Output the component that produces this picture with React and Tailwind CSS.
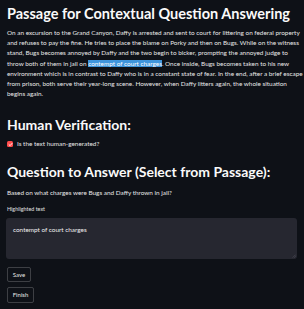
export default function App() {
  return (
    <div className="min-h-screen w-full bg-[#0e1117] text-[#fafafa] font-['Lato',sans-serif] pl-[7px] flex flex-col">
      <h1 className="mt-[4px] text-[14.5px] leading-[20px] font-bold">Passage for Contextual Question Answering</h1>
      <p className="mt-[4px] text-[6.4px] leading-[10.24px] text-[#e8e8e8] whitespace-nowrap">
        On an excursion to the Grand Canyon, Daffy is arrested and sent to court for littering on federal property
        <br />
        and refuses to pay the fine. He tries to place the blame on Porky and then on Bugs. While on the witness
        <br />
        stand, Bugs becomes annoyed by Daffy and the two begin to bicker, prompting the annoyed judge to
        <br />
        throw both of them in jail on <span className="bg-[#3f95dc] text-white">contempt of court charges</span>. Once inside, Bugs becomes taken to his new
        <br />
        environment which is in contrast to Daffy who is in a constant state of fear. In the end, after a brief escape
        <br />
        from prison, both serve their year-long scene. However, when Daffy litters again, the whole situation
        <br />
        begins again.
      </p>
      <h2 className="mt-[16px] text-[14px] leading-[18px] font-bold">Human Verification:</h2>
      <label className="mt-[5.5px] flex items-center gap-[4px] h-[10px] text-[6.4px] text-[#e8e8e8]">
        <span className="flex h-[6px] w-[6px] items-center justify-center rounded-[1.5px] bg-[#ff4b4b]">
          <svg viewBox="0 0 10 10" className="h-[5px] w-[5px]" fill="none" stroke="white" strokeWidth="1.8" strokeLinecap="round" strokeLinejoin="round">
            <path d="M2 5.2 L4.2 7.3 L8 2.8" />
          </svg>
        </span>
        Is the text human-generated?
      </label>
      <h2 className="mt-[13.5px] text-[14px] leading-[18px] font-bold">Question to Answer (Select from Passage):</h2>
      <p className="mt-[7px] text-[6.4px] leading-[10px] text-[#e8e8e8]">Based on what charges were Bugs and Daffy thrown in jail?</p>
      <p className="mt-[7px] text-[5.4px] leading-[8px] text-[#e0e0e0]">Highlighted text</p>
      <div className="relative mt-[5px] -ml-[1px] h-[41px] w-[291px] rounded-[3px] bg-[#262730] px-[7px] pt-[7px] text-[6.4px] leading-[10px] text-[#f0f0f0]">
        contempt of court charges
        <svg viewBox="0 0 6 6" className="absolute bottom-[1px] right-[1px] h-[4px] w-[4px]" stroke="#5a5b66" strokeWidth="0.8">
          <path d="M5.5 1 L1 5.5 M5.5 3.5 L3.5 5.5" />
        </svg>
      </div>
      <button className="mt-[8px] flex h-[15px] w-[24px] items-center justify-center rounded-[2px] border border-[#fafafa33] text-[6px] text-[#e8e8e8]">
        Save
      </button>
      <button className="mt-[5px] flex h-[16px] w-[27px] items-center justify-center rounded-[2px] border border-[#fafafa33] text-[6px] text-[#e8e8e8]">
        Finish
      </button>
    </div>
  )
}
